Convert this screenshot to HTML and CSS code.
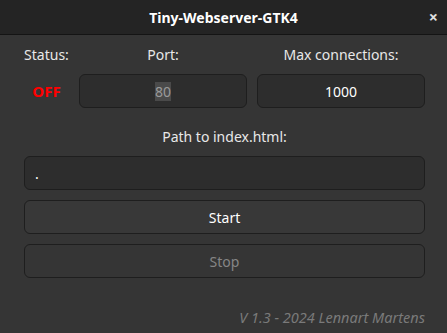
FILE: index.html
```html
<!DOCTYPE html>
<html lang="en">
<head>
    <meta charset="UTF-8">
    <title>Tiny-Webserver-GTK4</title>
    <link rel="stylesheet" href="styles.css">
</head>
<body>
    <div class="window">
        <header class="headerbar">
            <span class="title">Tiny-Webserver-GTK4</span>
            <span class="close-btn">&times;</span>
        </header>
        <main class="content">
            <div class="settings-grid">
                <div class="label">Status:</div>
                <div class="label">Port:</div>
                <div class="label">Max connections:</div>
                <div class="status off">OFF</div>
                <div class="entry centered"><span class="selected dim">80</span></div>
                <div class="entry centered">1000</div>
            </div>
            <div class="label path-label">Path to index.html:</div>
            <div class="entry path">.</div>
            <button class="btn">Start</button>
            <button class="btn" disabled>Stop</button>
            <footer class="version">V 1.3 - 2024 Lennart Martens</footer>
        </main>
    </div>
</body>
</html>
```

FILE: styles.css
```css
body {
    margin: 0;
    font-family: 'Noto Sans', sans-serif;
    font-size: 14px;
    background: #353535;
    color: #ffffff;
}
.window {
    width: 447px;
    height: 333px;
    display: flex;
    flex-direction: column;
}
.headerbar {
    height: 34px;
    background: #242424;
    border-bottom: 1px solid #141414;
    display: flex;
    align-items: center;
    justify-content: center;
    position: relative;
}
.title {
    font-weight: bold;
    font-size: 14px;
}
.close-btn {
    position: absolute;
    right: 9px;
    top: 7px;
    font-size: 16px;
    font-weight: bold;
    line-height: 20px;
    color: #e0e0e0;
}
.content {
    flex: 1;
    padding: 10px 22px 0 24px;
    display: flex;
    flex-direction: column;
}
.settings-grid {
    display: grid;
    grid-template-columns: 45px 168px 168px;
    column-gap: 10px;
    row-gap: 9px;
    align-items: center;
}
.label {
    text-align: center;
    color: #e8e8e8;
    line-height: 20px;
}
.status {
    text-align: center;
    font-weight: bold;
    font-size: 15px;
}
.off {
    color: #ff0000;
}
.entry {
    height: 32px;
    background: #2d2d2d;
    border: 1px solid #1e1e1e;
    border-radius: 6px;
    display: flex;
    align-items: center;
    padding: 0 10px;
}
.centered {
    justify-content: center;
}
.selected {
    background: #4a4a4a;
}
.dim {
    color: #9a9a9a;
}
.path-label {
    margin-top: 19px;
}
.path {
    margin-top: 9px;
}
.btn {
    margin-top: 10px;
    height: 34px;
    background: #383838;
    border: 1px solid #1e1e1e;
    border-radius: 6px;
    color: #ffffff;
    font-family: inherit;
    font-size: 14px;
}
.btn:disabled {
    color: #858585;
    background: #353535;
}
.version {
    margin-top: 29px;
    text-align: right;
    font-style: italic;
    font-size: 14.5px;
    color: #7a7a7a;
}
```
